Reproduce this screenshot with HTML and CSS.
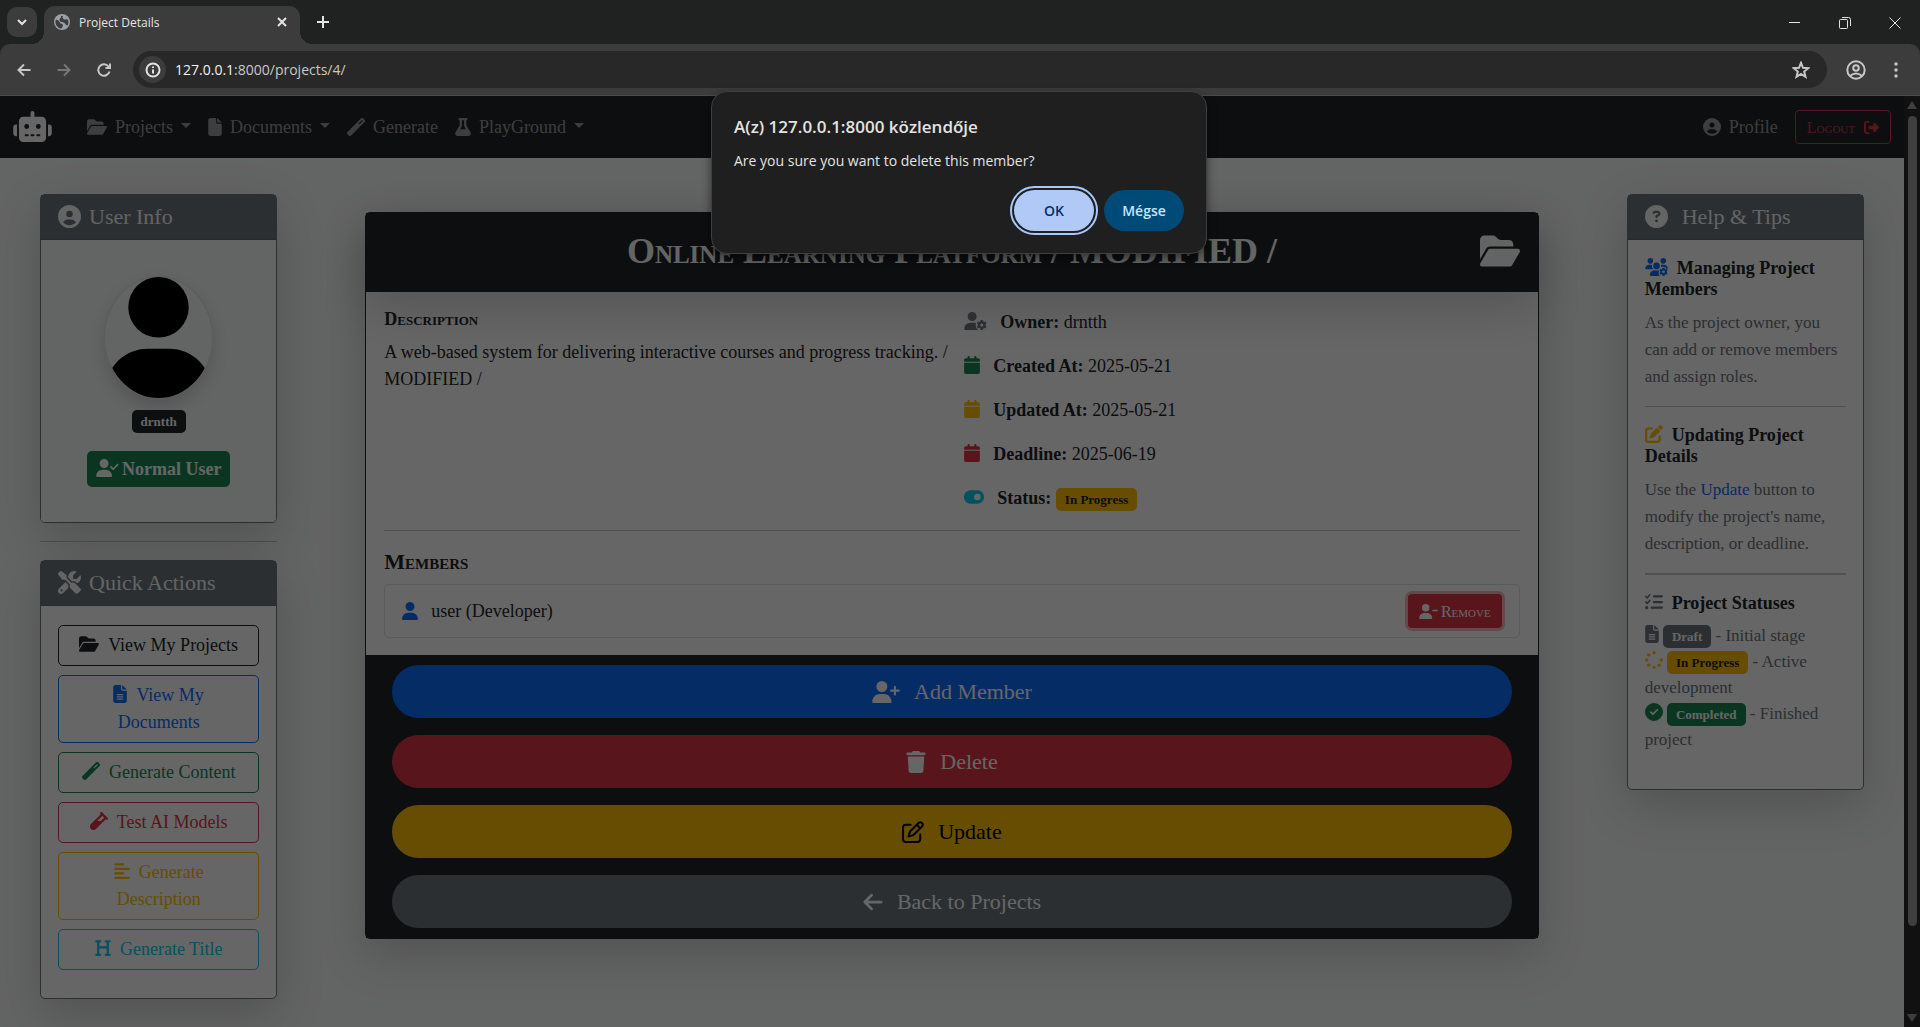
FILE: index.html
```html
<!DOCTYPE html>
<html lang="en">
<head>
<meta charset="utf-8">
<meta name="viewport" content="width=device-width, initial-scale=1">
<title>Project Details</title>
<link rel="stylesheet" href="styles.css">
</head>
<body>
<svg class="sprite" aria-hidden="true">
  <symbol id="robot" viewBox="0 0 640 512"><path d="M320 0c17.7 0 32 14.3 32 32V96H472c39.8 0 72 32.2 72 72V440c0 39.8-32.2 72-72 72H168c-39.8 0-72-32.2-72-72V168c0-39.8 32.2-72 72-72H288V32c0-17.7 14.3-32 32-32zM208 384c-8.8 0-16 7.2-16 16s7.2 16 16 16h32c8.8 0 16-7.2 16-16s-7.2-16-16-16H208zm96 0c-8.8 0-16 7.2-16 16s7.2 16 16 16h32c8.8 0 16-7.2 16-16s-7.2-16-16-16H304zm96 0c-8.8 0-16 7.2-16 16s7.2 16 16 16h32c8.8 0 16-7.2 16-16s-7.2-16-16-16H400zM264 256a40 40 0 1 0 -80 0 40 40 0 1 0 80 0zm152 40a40 40 0 1 0 0-80 40 40 0 1 0 0 80zM48 224H64V416H48c-26.5 0-48-21.5-48-48V272c0-26.5 21.5-48 48-48zm544 0c26.5 0 48 21.5 48 48v96c0 26.5-21.5 48-48 48H576V224h16z"/></symbol>
  <symbol id="folder" viewBox="0 0 576 512"><path d="M88.7 223.8L0 375.8V96C0 60.7 28.7 32 64 32H181.5c17 0 33.3 6.7 45.3 18.7l26.5 26.5c12 12 28.3 18.7 45.3 18.7H416c35.3 0 64 28.7 64 64v32H144c-22.8 0-43.8 12.1-55.3 31.8zm27.6 16.1C122.1 230 132.6 224 144 224H544c11.5 0 22 6.1 27.7 16.1s5.7 22.2-.1 32.1l-112 192C453.9 474 443.4 480 432 480H32c-11.5 0-22-6.1-27.7-16.1s-5.7-22.2 .1-32.1l112-192z"/></symbol>
  <symbol id="file" viewBox="0 0 384 512"><path d="M64 0C28.7 0 0 28.7 0 64V448c0 35.3 28.7 64 64 64H320c35.3 0 64-28.7 64-64V160H256c-17.7 0-32-14.3-32-32V0H64zM256 0V128H384L256 0z"/></symbol>
  <symbol id="file-lines" viewBox="0 0 384 512"><path d="M64 0C28.7 0 0 28.7 0 64V448c0 35.3 28.7 64 64 64H320c35.3 0 64-28.7 64-64V160H256c-17.7 0-32-14.3-32-32V0H64zM256 0V128H384L256 0zM112 256H272c8.8 0 16 7.2 16 16s-7.2 16-16 16H112c-8.8 0-16-7.2-16-16s7.2-16 16-16zm0 64H272c8.8 0 16 7.2 16 16s-7.2 16-16 16H112c-8.8 0-16-7.2-16-16s7.2-16 16-16zm0 64H272c8.8 0 16 7.2 16 16s-7.2 16-16 16H112c-8.8 0-16-7.2-16-16s7.2-16 16-16z"/></symbol>
  <symbol id="wand" viewBox="0 0 512 512"><path d="M14.1 463.3c-18.7-18.7-18.7-49.1 0-67.9L395.4 14.1c18.7-18.7 49.1-18.7 67.9 0l34.6 34.6c18.7 18.7 18.7 49.1 0 67.9L116.5 497.9c-18.7 18.7-49.1 18.7-67.9 0L14.1 463.3zM347.6 187.6l105-105L429.4 59.3l-105 105 23.3 23.3z"/></symbol>
  <symbol id="flask" viewBox="0 0 448 512"><path d="M288 0H160 128C110.3 0 96 14.3 96 32s14.3 32 32 32V196.8c0 11.8-3.3 23.5-9.5 33.5L10.3 406.2C3.6 417.2 0 429.7 0 442.6C0 480.9 31.1 512 69.4 512H378.6c38.3 0 69.4-31.1 69.4-69.4c0-12.8-3.6-25.4-10.3-36.4L329.5 230.4c-6.2-10.1-9.5-21.7-9.5-33.5V64c17.7 0 32-14.3 32-32s-14.3-32-32-32H288zM192 196.8V64h64V196.8c0 23.7 6.6 46.9 19 67.1L309.5 320h-171L173 263.9c12.4-20.2 19-43.4 19-67.1z"/></symbol>
  <symbol id="vial" viewBox="0 0 512 512"><path d="M342.6 9.4c-12.5-12.5-32.8-12.5-45.3 0s-12.5 32.8 0 45.3l9.4 9.4L28.1 342.6C10.1 360.6 0 385 0 410.5V416c0 53 43 96 96 96h5.5c25.5 0 49.9-10.1 67.9-28.1L448 205.3l9.4 9.4c12.5 12.5 32.8 12.5 45.3 0s12.5-32.8 0-45.3l-32-32-96-96-32-32zM205.3 256L352 109.3 402.7 160l-96 96H205.3z"/></symbol>
  <symbol id="circle-user" viewBox="0 0 512 512"><path d="M399 384.2C376.9 345.8 335.4 320 288 320H224c-47.4 0-88.9 25.8-111 64.2c35.2 39.2 86.2 63.8 143 63.8s107.8-24.7 143-63.8zM0 256a256 256 0 1 1 512 0A256 256 0 1 1 0 256zm256 16a72 72 0 1 0 0-144 72 72 0 1 0 0 144z"/></symbol>
  <symbol id="circle-question" viewBox="0 0 512 512"><path d="M256 512A256 256 0 1 0 256 0a256 256 0 1 0 0 512zM169.8 165.3c7.9-22.3 29.1-37.3 52.8-37.3h58.3c34.9 0 63.1 28.3 63.1 63.1c0 22.6-12.1 43.5-31.7 54.8L280 264.4c-.2 13-10.9 23.6-24 23.6c-13.3 0-24-10.7-24-24V250.5c0-8.6 4.6-16.5 12.1-20.8l44.3-25.4c4.7-2.7 7.6-7.7 7.6-13.1c0-8.4-6.8-15.1-15.1-15.1H222.6c-3.4 0-6.4 2.1-7.5 5.3l-.4 1.2c-4.4 12.5-18.2 19-30.6 14.6s-19-18.2-14.6-30.6l.4-1.2zM224 352a32 32 0 1 1 64 0 32 32 0 1 1 -64 0z"/></symbol>
  <symbol id="logout" viewBox="0 0 512 512"><path d="M377.9 105.9L500.7 228.7c7.2 7.2 11.3 17.1 11.3 27.3s-4.1 20.1-11.3 27.3L377.9 406.1c-6.4 6.4-15 9.9-24 9.9c-18.7 0-33.9-15.2-33.9-33.9l0-62.1-128 0c-17.7 0-32-14.3-32-32l0-64c0-17.7 14.3-32 32-32l128 0 0-62.1c0-18.7 15.2-33.9 33.9-33.9c9 0 17.6 3.6 24 9.9zM160 96L96 96c-17.7 0-32 14.3-32 32l0 256c0 17.7 14.3 32 32 32l64 0c17.7 0 32 14.3 32 32s-14.3 32-32 32l-64 0c-53 0-96-43-96-96L0 128C0 75 43 32 96 32l64 0c17.7 0 32 14.3 32 32s-14.3 32-32 32z"/></symbol>
  <symbol id="tools" viewBox="0 0 512 512"><path d="M78.6 5C69.1-2.4 55.6-1.5 47 7L7 47c-8.5 8.5-9.4 22-2.1 31.6l80 104c4.5 5.9 11.6 9.4 19 9.4h54.1l109 109c-14.7 29-10 65.4 14.3 89.6l112 112c12.5 12.5 32.8 12.5 45.3 0l64-64c12.5-12.5 12.5-32.8 0-45.3l-112-112c-24.2-24.2-60.6-29-89.6-14.3l-109-109V104c0-7.5-3.5-14.5-9.4-19L78.6 5zM19.9 396.1C7.2 408.8 0 426.1 0 444.1C0 481.6 30.4 512 67.9 512c18 0 35.3-7.2 48-19.9L233.7 374.3c-7.8-20.9-9-43.6-3.6-65.1l-61.7-61.7L19.9 396.1zM512 144c0-10.5-1.1-20.7-3.2-30.5c-2.4-11.2-16.1-14.1-24.2-6l-63.9 63.9c-3 3-7.1 4.7-11.3 4.7H352c-8.8 0-16-7.2-16-16V102.6c0-4.2 1.7-8.3 4.7-11.3l63.9-63.9c8.1-8.1 5.2-21.8-6-24.2C388.7 1.1 378.5 0 368 0C288.5 0 224 64.5 224 144l0 .8 85.3 85.3c36-9.1 75.8 .5 104 28.7L429 274.5c49-23 83-72.8 83-130.5zM56 432a24 24 0 1 1 48 0 24 24 0 1 1 -48 0z"/></symbol>
  <symbol id="align-left" viewBox="0 0 448 512"><path d="M32 64H256M32 192H416M32 320H256M32 448H416" fill="none" stroke="currentColor" stroke-width="64" stroke-linecap="round"/></symbol>
  <symbol id="heading" viewBox="0 0 448 512"><path d="M32 64H144M304 64H416M32 448H144M304 448H416M88 64V448M360 64V448M88 240H360" fill="none" stroke="currentColor" stroke-width="64" stroke-linecap="round"/></symbol>
  <symbol id="user" viewBox="0 0 448 512"><path d="M224 256A128 128 0 1 0 224 0a128 128 0 1 0 0 256zm-45.7 48C79.8 304 0 383.8 0 482.3C0 498.7 13.3 512 29.7 512H418.3c16.4 0 29.7-13.3 29.7-29.7C448 383.8 368.2 304 269.7 304H178.3z"/></symbol>
  <symbol id="user-plus" viewBox="0 0 640 512"><path d="M96 128a128 128 0 1 1 256 0A128 128 0 1 1 96 128zM0 482.3C0 383.8 79.8 304 178.3 304h91.4C368.2 304 448 383.8 448 482.3c0 16.4-13.3 29.7-29.7 29.7H29.7C13.3 512 0 498.7 0 482.3zM504 312V248H440c-13.3 0-24-10.7-24-24s10.7-24 24-24h64V136c0-13.3 10.7-24 24-24s24 10.7 24 24v64h64c13.3 0 24 10.7 24 24s-10.7 24-24 24H552v64c0 13.3-10.7 24-24 24s-24-10.7-24-24z"/></symbol>
  <symbol id="user-minus" viewBox="0 0 640 512"><path d="M96 128a128 128 0 1 1 256 0A128 128 0 1 1 96 128zM0 482.3C0 383.8 79.8 304 178.3 304h91.4C368.2 304 448 383.8 448 482.3c0 16.4-13.3 29.7-29.7 29.7H29.7C13.3 512 0 498.7 0 482.3zM472 200H616c13.3 0 24 10.7 24 24s-10.7 24-24 24H472c-13.3 0-24-10.7-24-24s10.7-24 24-24z"/></symbol>
  <symbol id="user-check" viewBox="0 0 640 512"><path d="M96 128a128 128 0 1 1 256 0A128 128 0 1 1 96 128zM0 482.3C0 383.8 79.8 304 178.3 304h91.4C368.2 304 448 383.8 448 482.3c0 16.4-13.3 29.7-29.7 29.7H29.7C13.3 512 0 498.7 0 482.3zM625 177L497 305c-9.4 9.4-24.6 9.4-33.9 0l-64-64c-9.4-9.4-9.4-24.6 0-33.9s24.6-9.4 33.9 0l47 47L591 143c9.4-9.4 24.6-9.4 33.9 0s9.4 24.6 0 33.9z"/></symbol>
  <symbol id="gear" viewBox="0 0 512 512"><path d="M495.9 166.6c3.2 8.7 .5 18.4-6.4 24.6l-43.3 39.4c1.1 8.3 1.7 16.8 1.7 25.4s-.6 17.1-1.7 25.4l43.3 39.4c6.9 6.2 9.6 15.9 6.4 24.6c-4.4 11.9-9.7 23.3-15.8 34.3l-4.7 8.1c-6.6 11-14 21.4-22.1 31.2c-5.9 7.2-15.7 9.6-24.5 6.8l-55.7-17.7c-13.4 10.3-28.2 18.9-44 25.4l-12.5 57.1c-2 9.1-9 16.3-18.2 17.8c-13.8 2.3-28 3.5-42.5 3.5s-28.7-1.2-42.5-3.5c-9.2-1.5-16.2-8.7-18.2-17.8l-12.5-57.1c-15.8-6.5-30.6-15.1-44-25.4L83.1 425.9c-8.8 2.8-18.6 .3-24.5-6.8c-8.1-9.8-15.5-20.2-22.1-31.2l-4.7-8.1c-6.1-11-11.4-22.4-15.8-34.3c-3.2-8.7-.5-18.4 6.4-24.6l43.3-39.4C64.6 273.1 64 264.6 64 256s.6-17.1 1.7-25.4L22.4 191.2c-6.9-6.2-9.6-15.9-6.4-24.6c4.4-11.9 9.7-23.3 15.8-34.3l4.7-8.1c6.6-11 14-21.4 22.1-31.2c5.9-7.2 15.7-9.6 24.5-6.8l55.7 17.7c13.4-10.3 28.2-18.9 44-25.4l12.5-57.1c2-9.1 9-16.3 18.2-17.8C227.3 1.2 241.5 0 256 0s28.7 1.2 42.5 3.5c9.2 1.5 16.2 8.7 18.2 17.8l12.5 57.1c15.8 6.5 30.6 15.1 44 25.4l55.7-17.7c8.8-2.8 18.6-.3 24.5 6.8c8.1 9.8 15.5 20.2 22.1 31.2l4.7 8.1c6.1 11 11.4 22.4 15.8 34.3zM256 336a80 80 0 1 0 0-160 80 80 0 1 0 0 160z"/></symbol>
  <symbol id="user-gear" viewBox="0 0 640 512"><path d="M224 256A128 128 0 1 0 224 0a128 128 0 1 0 0 256zM178.3 304C79.8 304 0 383.8 0 482.3C0 498.7 13.3 512 29.7 512H392C350 470 310 420 334 315C314 308 292 304 269.7 304z"/><use href="#gear" x="354" y="226" width="286" height="286"/></symbol>
  <symbol id="users-gear" viewBox="0 0 640 512"><path d="M144 160A80 80 0 1 0 144 0a80 80 0 1 0 0 160zm368 0A80 80 0 1 0 512 0a80 80 0 1 0 0 160zM0 298.7C0 310.4 9.6 320 21.3 320H234.7c-26.6-23.5-43.3-57.8-43.3-96c0-7.6 .7-15 1.9-22.3c-13.6-6.3-28.7-9.7-44.6-9.7H106.7C47.8 192 0 239.8 0 298.7zM320 320a96 96 0 1 0 0-192a96 96 0 1 0 0 192zM261.3 352C187.7 352 128 411.7 128 485.3c0 14.7 11.9 26.7 26.7 26.7H410C380 470 372 415 395 358C387 354 380 352 372 352zM640 298.7C640 239.8 592.2 192 533.3 192H490.7c-15.9 0-31 3.5-44.6 9.7c1.3 7.2 1.9 14.7 1.9 22.3c0 15-2.6 29-7 42c70-30 140-10 170 54c16 0 29-8 29-21.3z"/><use href="#gear" x="398" y="270" width="242" height="242"/></symbol>
  <symbol id="calendar" viewBox="0 0 448 512"><path d="M96 32V64H48C21.5 64 0 85.5 0 112v48H448V112c0-26.5-21.5-48-48-48H352V32c0-17.7-14.3-32-32-32s-32 14.3-32 32V64H160V32c0-17.7-14.3-32-32-32S96 14.3 96 32zM448 192H0V464c0 26.5 21.5 48 48 48H400c26.5 0 48-21.5 48-48V192z"/></symbol>
  <symbol id="toggle" viewBox="0 0 576 512"><path d="M192 64C86 64 0 150 0 256S86 448 192 448H384c106 0 192-86 192-192s-86-192-192-192H192zm192 96a96 96 0 1 1 0 192 96 96 0 1 1 0-192z"/></symbol>
  <symbol id="trash" viewBox="0 0 448 512"><path d="M135.2 17.7L128 32H32C14.3 32 0 46.3 0 64S14.3 96 32 96H416c17.7 0 32-14.3 32-32s-14.3-32-32-32H320l-7.2-14.3C307.4 6.8 296.3 0 284.2 0H163.8c-12.1 0-23.2 6.8-28.6 17.7zM416 128H32L53.2 467c1.6 25.3 22.6 45 47.9 45H346.9c25.3 0 46.3-19.7 47.9-45L416 128z"/></symbol>
  <symbol id="edit-outline" viewBox="0 0 512 512"><path d="M441 58.9L453.1 71c9.4 9.4 9.4 24.6 0 33.9L424 134.1 377.9 88 407 58.9c9.4-9.4 24.6-9.4 33.9 0zM209.8 256.2L344 121.9 390.1 168 255.8 302.2c-2.9 2.9-6.5 5-10.4 6.1l-58.5 16.7 16.7-58.5c1.1-3.9 3.2-7.5 6.1-10.4zM373.1 25L175.8 222.2c-8.7 8.7-15 19.4-18.3 31.1l-28.6 100c-2.4 8.4-.1 17.4 6.1 23.6s15.2 8.5 23.6 6.1l100-28.6c11.8-3.4 22.5-9.7 31.1-18.3L487 138.9c28.1-28.1 28.1-73.7 0-101.8L474.9 25C446.8-3.1 401.2-3.1 373.1 25zM88 64C39.4 64 0 103.4 0 152V424c0 48.6 39.4 88 88 88H360c48.6 0 88-39.4 88-88V312c0-13.3-10.7-24-24-24s-24 10.7-24 24V424c0 22.1-17.9 40-40 40H88c-22.1 0-40-17.9-40-40V152c0-22.1 17.9-40 40-40H200c13.3 0 24-10.7 24-24s-10.7-24-24-24H88z"/></symbol>
  <symbol id="edit" viewBox="0 0 512 512"><path d="M471.6 21.7c-21.9-21.9-57.3-21.9-79.2 0L362.3 51.7l97.9 97.9 30.1-30.1c21.9-21.9 21.9-57.3 0-79.2L471.6 21.7zm-299.2 220c-6.1 6.1-10.8 13.6-13.5 21.9l-29.6 88.8c-2.9 8.6-.6 18.1 5.8 24.6s15.9 8.7 24.6 5.8l88.8-29.6c8.2-2.7 15.7-7.4 21.9-13.5L437.7 172.3 339.7 74.3 172.4 241.7zM96 64C43 64 0 107 0 160V416c0 53 43 96 96 96H352c53 0 96-43 96-96V320c0-17.7-14.3-32-32-32s-32 14.3-32 32v96c0 17.7-14.3 32-32 32H96c-17.7 0-32-14.3-32-32V160c0-17.7 14.3-32 32-32h96c17.7 0 32-14.3 32-32s-14.3-32-32-32H96z"/></symbol>
  <symbol id="arrow-left" viewBox="0 0 448 512"><path d="M9.4 233.4c-12.5 12.5-12.5 32.8 0 45.3l160 160c12.5 12.5 32.8 12.5 45.3 0s12.5-32.8 0-45.3L109.2 288 416 288c17.7 0 32-14.3 32-32s-14.3-32-32-32l-306.7 0L214.6 118.6c12.5-12.5 12.5-32.8 0-45.3s-32.8-12.5-45.3 0l-160 160z"/></symbol>
  <symbol id="list-check" viewBox="0 0 512 512"><path d="M24 100l40 36 72-84M24 260l40 36 72-84" fill="none" stroke="currentColor" stroke-width="46" stroke-linecap="round" stroke-linejoin="round"/><path d="M256 96H480M256 256H480M192 416H480" fill="none" stroke="currentColor" stroke-width="64" stroke-linecap="round"/><circle cx="48" cy="416" r="48"/></symbol>
  <symbol id="spinner" viewBox="0 0 512 512"><circle cx="256" cy="48" r="48"/><circle cx="256" cy="464" r="48"/><circle cx="48" cy="256" r="48"/><circle cx="464" cy="256" r="48"/><circle cx="109" cy="109" r="48"/><circle cx="109" cy="403" r="48"/><circle cx="403" cy="403" r="48"/></symbol>
  <symbol id="circle-check" viewBox="0 0 512 512"><path d="M256 512A256 256 0 1 0 256 0a256 256 0 1 0 0 512zM369 209L241 337c-9.4 9.4-24.6 9.4-33.9 0l-64-64c-9.4-9.4-9.4-24.6 0-33.9s24.6-9.4 33.9 0l47 47L335 175c9.4-9.4 24.6-9.4 33.9 0s9.4 24.6 0 33.9z"/></symbol>
</svg>

<header class="browser">
  <div class="tabstrip">
    <button class="tab-search" aria-label="Search tabs"><svg width="10" height="10" viewBox="0 0 10 10" class="line"><path d="M1 3l4 4 4-4"/></svg></button>
    <div class="tab">
      <svg width="16" height="16" viewBox="0 0 16 16"><circle cx="8" cy="8" r="8" fill="#9aa0a6"/><path d="M2 5.500q3 .5 3.500 2.500t3 2q1 2.500-1 4.500A6.500 6.500 0 0 1 2 5.500zM7 2l2 0q-1 2 .5 3t3 0l1.500 1q1 3-.5 5.500-2-.5-2.500-2t-3-1.500-2.500-2 1.500-2.500z" fill="#3c3c3c"/></svg>
      <span class="tab-title">Project Details</span>
      <button class="tab-close" aria-label="Close tab"><svg width="10" height="10" viewBox="0 0 10 10" class="line"><path d="M1 1l8 8M9 1l-8 8"/></svg></button>
    </div>
    <button class="icon-btn" aria-label="New tab"><svg width="12" height="12" viewBox="0 0 12 12" class="line"><path d="M6 0v12M0 6h12"/></svg></button>
    <div class="window-controls">
      <button class="win-btn" aria-label="Minimize"><svg width="12" height="12" viewBox="0 0 12 12" class="line thin"><path d="M0 5.500h11"/></svg></button>
      <button class="win-btn" aria-label="Restore"><svg width="12" height="12" viewBox="0 0 12 12" class="line thin"><rect x=".5" y="2.500" width="8" height="9" rx="1"/><path d="M3 .5h6.500q2 0 2 2V9"/></svg></button>
      <button class="win-btn" aria-label="Close"><svg width="12" height="12" viewBox="0 0 12 12" class="line thin"><path d="M.5 .5l11 11M11.500 .5l-11 11"/></svg></button>
    </div>
  </div>
  <div class="toolbar">
    <button class="tool-btn" aria-label="Back"><svg width="14" height="14" viewBox="0 0 14 14" class="line"><path d="M13.500 7H1.500M7 1.500L1.500 7 7 12.500"/></svg></button>
    <button class="tool-btn dim" aria-label="Forward"><svg width="14" height="14" viewBox="0 0 14 14" class="line"><path d="M.5 7h12M7 1.500L12.500 7 7 12.500"/></svg></button>
    <button class="tool-btn" aria-label="Reload"><svg width="14" height="14" viewBox="0 0 14 14" class="line"><path d="M12.500 8.500a5.700 5.700 0 1 1-1-5L13 5M13 .5V5H8.500"/></svg></button>
    <div class="omnibox">
      <span class="site-info"><svg width="16" height="16" viewBox="0 0 16 16" class="line"><circle cx="8" cy="8" r="6.500"/><path d="M8 7.500v4M8 4.500v1.500"/></svg></span>
      <span class="url"><span class="host">127.0.0.1</span>:8000/projects/4/</span>
      <svg width="18" height="18" viewBox="0 0 18 18" class="line"><path d="M9 1.800l2 5 5.300.4-4.100 3.400 1.300 5.200L9 13l-4.500 2.800 1.300-5.200L1.700 7.200 7 6.800z"/></svg>
    </div>
    <button class="tool-btn" aria-label="Profile"><svg width="20" height="20" viewBox="0 0 20 20" class="line"><circle cx="10" cy="10" r="8.700"/><circle cx="10" cy="8" r="2.800"/><path d="M4 16q6-5 12 0"/></svg></button>
    <button class="tool-btn" aria-label="Menu"><svg width="4" height="16" viewBox="0 0 4 16" class="dots"><circle cx="2" cy="2" r="1.700"/><circle cx="2" cy="8" r="1.700"/><circle cx="2" cy="14" r="1.700"/></svg></button>
  </div>
</header>

<div class="viewport">
  <div class="page">
    <nav class="navbar">
      <a class="brand" href="#" aria-label="Home"><svg class="fa" viewBox="0 0 640 512"><use href="#robot"/></svg></a>
      <a class="nav-link caret" href="#"><svg class="fa w20"><use href="#folder"/></svg>Projects</a>
      <a class="nav-link caret" href="#"><svg class="fa w14"><use href="#file"/></svg>Documents</a>
      <a class="nav-link" href="#"><svg class="fa w18"><use href="#wand"/></svg>Generate</a>
      <a class="nav-link caret" href="#"><svg class="fa w16"><use href="#flask"/></svg>PlayGround</a>
      <a class="nav-link nav-end" href="#"><svg class="fa w18"><use href="#circle-user"/></svg>Profile</a>
      <button class="btn-sm logout">Logout <svg class="fa"><use href="#logout"/></svg></button>
    </nav>

    <main class="columns">
      <aside class="side">
        <section class="card">
          <h2 class="card-head"><svg class="fa"><use href="#circle-user"/></svg>User Info</h2>
          <div class="user-body">
            <svg class="avatar" viewBox="0 0 448 512"><use href="#user"/></svg>
            <span class="badge dark">drntth</span>
            <span class="badge role"><svg class="fa w23"><use href="#user-check"/></svg>Normal User</span>
          </div>
        </section>
        <hr>
        <section class="card">
          <h2 class="card-head"><svg class="fa"><use href="#tools"/></svg>Quick Actions</h2>
          <div class="actions">
            <a class="btn-outline c-dark" href="#"><svg class="fa w20"><use href="#folder"/></svg>View My Projects</a>
            <a class="btn-outline c-primary" href="#"><svg class="fa w14"><use href="#file-lines"/></svg>View My Documents</a>
            <a class="btn-outline c-success" href="#"><svg class="fa w18"><use href="#wand"/></svg>Generate Content</a>
            <a class="btn-outline c-danger" href="#"><svg class="fa w18"><use href="#vial"/></svg>Test AI Models</a>
            <a class="btn-outline c-warning" href="#"><svg class="fa w16"><use href="#align-left"/></svg>Generate Description</a>
            <a class="btn-outline c-info" href="#"><svg class="fa w16"><use href="#heading"/></svg>Generate Title</a>
          </div>
        </section>
      </aside>

      <section class="project">
        <header class="project-head">
          <h1>Online Learning Platform / MODIFIED /</h1>
          <svg class="fa"><use href="#folder"/></svg>
        </header>
        <div class="project-body">
          <div class="details">
            <div>
              <h3>Description</h3>
              <p>A web-based system for delivering interactive courses and progress tracking. / MODIFIED /</p>
            </div>
            <ul class="facts">
              <li><svg class="fa w23 c-secondary"><use href="#user-gear"/></svg><strong>Owner:</strong> drntth</li>
              <li><svg class="fa w16 c-success"><use href="#calendar"/></svg><strong>Created At:</strong> 2025-05-21</li>
              <li><svg class="fa w16 c-warning"><use href="#calendar"/></svg><strong>Updated At:</strong> 2025-05-21</li>
              <li><svg class="fa w16 c-danger"><use href="#calendar"/></svg><strong>Deadline:</strong> 2025-06-19</li>
              <li><svg class="fa w20 c-info"><use href="#toggle"/></svg><strong>Status:</strong> <span class="badge warning">In Progress</span></li>
            </ul>
          </div>
          <hr>
          <h2 class="members-title">Members</h2>
          <ul class="members">
            <li><svg class="fa w16 c-primary"><use href="#user"/></svg>user (Developer)<button class="btn-sm remove"><svg class="fa"><use href="#user-minus"/></svg>Remove</button></li>
          </ul>
        </div>
        <footer class="project-foot">
          <button class="pill primary"><svg class="fa w28"><use href="#user-plus"/></svg>Add Member</button>
          <button class="pill danger"><svg class="fa w20"><use href="#trash"/></svg>Delete</button>
          <button class="pill warning"><svg class="fa w22"><use href="#edit-outline"/></svg>Update</button>
          <button class="pill secondary"><svg class="fa w20"><use href="#arrow-left"/></svg>Back to Projects</button>
        </footer>
      </section>

      <aside class="side">
        <section class="card">
          <h2 class="card-head help-head"><svg class="fa"><use href="#circle-question"/></svg>Help &amp; Tips</h2>
          <div class="help-body">
            <h3><svg class="fa w23 c-primary"><use href="#users-gear"/></svg>Managing Project Members</h3>
            <p>As the project owner, you can add or remove members and assign roles.</p>
            <hr>
            <h3><svg class="fa w18 c-warning"><use href="#edit"/></svg>Updating Project Details</h3>
            <p>Use the <a href="#">Update</a> button to modify the project's name, description, or deadline.</p>
            <hr class="thick">
            <h3><svg class="fa w18 c-secondary"><use href="#list-check"/></svg>Project Statuses</h3>
            <ul class="statuses">
              <li><svg class="fa w14"><use href="#file-lines"/></svg> <span class="badge secondary">Draft</span> - Initial stage</li>
              <li><svg class="fa w18 c-warning"><use href="#spinner"/></svg> <span class="badge warning">In Progress</span> - Active development</li>
              <li><svg class="fa w18 c-success"><use href="#circle-check"/></svg> <span class="badge success">Completed</span> - Finished project</li>
            </ul>
          </div>
        </section>
      </aside>
    </main>
  </div>
  <div class="scrollbar" aria-hidden="true"><i class="arrow up"></i><i class="thumb"></i><i class="arrow down"></i></div>
  <div class="backdrop"></div>
</div>

<dialog class="confirm" open aria-labelledby="confirm-title">
  <h2 id="confirm-title">A(z) 127.0.0.1:8000 közlendője</h2>
  <p>Are you sure you want to delete this member?</p>
  <div class="confirm-actions">
    <button class="ok">OK</button>
    <button class="cancel">Mégse</button>
  </div>
</dialog>
</body>
</html>
```

FILE: styles.css
```css
* { box-sizing: border-box; }

body {
  margin: 0;
  height: 100vh;
  display: flex;
  flex-direction: column;
  overflow: hidden;
  font: 18px/27px "Liberation Serif", "Times New Roman", serif;
  color: #212529;
  background: #202221;
}

h1, h2, h3, p, ul { margin: 0; padding: 0; font-size: inherit; }
ul { list-style: none; }
button { font: inherit; color: inherit; border: 0; padding: 0; background: none; cursor: pointer; }
a { text-decoration: none; }
.sprite { display: none; }
hr { margin: 18px 0; border: 0; border-top: 1px solid #212529; opacity: .25; }

/* Icons */
.fa { height: 18px; width: 18px; fill: currentColor; fill-rule: evenodd; vertical-align: -2px; flex: none; }
.w14 { width: 14px; }
.w16 { width: 16px; }
.w18 { width: 18px; }
.w20 { width: 20px; }
.w22 { width: 22px; }
.w23 { width: 23px; }
.w28 { width: 28px; }

.c-dark { color: #212529; }
.c-primary { color: #0d6efd; }
.c-success { color: #198754; }
.c-danger { color: #dc3545; }
.c-warning { color: #ffc107; }
.c-info { color: #0dcaf0; }
.c-secondary { color: #6c757d; }

/* Browser frame */
.browser { flex: none; font: 12px/16px "Open Sans", "Noto Sans", sans-serif; color: #e3e3e3; }
.browser button { display: grid; place-items: center; }
.line { fill: none; stroke: currentColor; stroke-width: 2; }
.line.thin { stroke-width: 1; }
.dots { fill: currentColor; }
.tabstrip { height: 44px; display: flex; align-items: center; padding: 6px 0 0 7px; }
.tab-search { width: 30px; height: 30px; border-radius: 10px; background: #3c3c3c !important; margin: 0 7px 6px 0; }
.tab {
  position: relative;
  align-self: stretch;
  width: 256px;
  display: flex;
  align-items: center;
  gap: 9px;
  padding: 0 12px 6px 10px;
  background: #3c3c3c;
  border-radius: 11px 11px 0 0;
}
.tab::before, .tab::after {
  content: "";
  position: absolute;
  bottom: 0;
  width: 12px;
  height: 12px;
}
.tab::before { right: 100%; background: radial-gradient(circle at 0 0, transparent 12px, #3c3c3c 12px); }
.tab::after { left: 100%; background: radial-gradient(circle at 100% 0, transparent 12px, #3c3c3c 12px); }
.tab-title { flex: 1; padding-top: 2px; }
.tab-close { width: 12px; height: 16px; }
.icon-btn { width: 30px; height: 30px; margin: 0 8px 6px; }
.window-controls { display: flex; margin-left: auto; padding-bottom: 4px; }
.win-btn { width: 50px; height: 30px; }
.toolbar {
  height: 52px;
  display: flex;
  align-items: center;
  padding: 0 4px;
  background: #3c3c3c;
  border-bottom: 1px solid #4c4c4c;
  border-radius: 10px 10px 0 0;
}
.tool-btn { width: 40px; height: 36px; color: #c7c7c7; }
.tool-btn.dim { color: #777; }
.omnibox {
  flex: 1;
  height: 37px;
  margin: 0 9px;
  padding: 0 17px 0 6px;
  display: flex;
  align-items: center;
  gap: 9px;
  border-radius: 19px;
  background: #282828;
  color: #c7c7c7;
  font-size: 14px;
}
.site-info { width: 27px; height: 27px; border-radius: 14px; background: #3c3c3c; display: grid; place-items: center; color: #e3e3e3; }
.url { flex: 1; }
.host { color: #f0f0f0; }

/* Web page area */
.viewport { position: relative; flex: 1; min-height: 0; display: flex; }
.page { flex: 1; min-width: 0; overflow: hidden; background: #f8f9fa; }
.backdrop { position: absolute; inset: 0; background: rgba(0, 0, 0, .6); }
.scrollbar { width: 16px; background: #2c2c2c; display: flex; flex-direction: column; align-items: center; padding: 5px 0; gap: 7px; }
.arrow { border: 5px solid transparent; }
.arrow.up { border-top: 0; border-bottom: 8px solid #9f9f9f; }
.arrow.down { border-bottom: 0; border-top: 8px solid #9f9f9f; margin-top: auto; }
.thumb { width: 9px; height: 88%; border-radius: 5px; background: #9f9f9f; }

.navbar { height: 62px; padding: 0 13px; display: flex; align-items: center; background: #212529; }
.brand { color: #fff; margin-right: 35px; padding-bottom: 2px; }
.brand .fa { display: block; width: 39px; height: 31px; }
.nav-link { display: flex; align-items: center; gap: 8px; margin-right: 17px; color: rgba(255, 255, 255, .55); }
.caret::after { content: ""; border: 5px solid transparent; border-top-color: currentColor; border-bottom: 0; margin-bottom: 4px; }
.nav-end { margin-left: auto; }
.btn-sm { height: 34px; padding: 0 11px; border-radius: 4px; font-size: 16px; font-variant: small-caps; }
.btn-sm .fa { height: 15px; width: 15px; }
.logout { border: 1px solid #dc3545; color: #dc3545; }
.logout .fa { margin-left: 5px; }

.columns { display: grid; grid-template-columns: minmax(0, 1fr) minmax(0, 4fr) minmax(0, 1fr); align-items: start; }
.side { padding: 36px 40px; }

.card { border: 1px solid #6c757d; border-radius: 5px; background: #fff; box-shadow: 0 16px 48px rgba(0, 0, 0, .175); }
.card-head {
  height: 45px;
  padding: 0 17px 2px;
  display: flex;
  align-items: center;
  gap: 8px;
  background: #6c757d;
  border-bottom: 1px solid #61696f;
  color: #f8f9fa;
  font-size: 22px;
  font-weight: 400;
}
.card-head .fa { width: 23px; height: 23px; }
.help-head { gap: 14px; }

.user-body { display: flex; flex-direction: column; align-items: center; padding: 36px 17px 35px; background: #f8f9fa; border-radius: 0 0 4px 4px; }
.avatar { width: 109px; height: 123px; border: 1px solid #dee2e6; border-radius: 50%; fill: #000; box-shadow: 0 8px 16px rgba(0, 0, 0, .15); margin-bottom: 11px; }
.badge { display: inline-block; padding: 0 9px; border-radius: 5px; font-size: 13px; line-height: 23px; font-weight: 700; color: #fff; vertical-align: baseline; }
.badge.dark { background: #212529; }
.badge.secondary { background: #6c757d; }
.badge.success { background: #198754; }
.badge.warning { background: #ffc107; color: #212529; }
.badge.role { margin-top: 18px; font-size: 18px; line-height: 36px; background: #198754; }
.badge.role .fa { margin-right: 3px; }

.actions { display: flex; flex-direction: column; gap: 9px; padding: 19px 17px 28px; }
.btn-outline { border: 1px solid currentColor; border-radius: 5px; padding: 6px 12px; line-height: 27px; text-align: center; }
.btn-outline .fa { margin-right: 9px; }

/* Project card */
.project { margin: 54px 48px 0; border: 1px solid #212529; border-radius: 5px; background: #fff; box-shadow: 0 16px 48px rgba(0, 0, 0, .175); }
.project-head { height: 79px; padding: 0 18px 3px; display: flex; align-items: center; background: #212529; color: #f8f9fa; box-shadow: 0 16px 48px rgba(0, 0, 0, .175); }
.project-head h1 { flex: 1; padding-left: 40px; font-size: 36px; line-height: 42px; font-variant: small-caps; text-align: center; }
.project-head .fa { width: 40px; height: 36px; }
.project-body { padding: 17px 18px; }
.details { display: grid; grid-template-columns: 51fr 49fr; }
.details h3 { font-variant: small-caps; line-height: 21px; margin-bottom: 9px; }
.facts { display: grid; gap: 18px; padding: 0 0 1px 1px; }
.facts .fa, .members .fa { margin-right: 13px; }
.facts li { height: 26px; }
.members-title { font-size: 22px; line-height: 26px; font-variant: small-caps; margin-bottom: 9px; }
.members li { height: 54px; padding: 0 17px; display: flex; align-items: center; border: 1px solid #dee2e6; border-radius: 5px; }
.remove { margin-left: auto; background: #dc3545; color: #fff; box-shadow: 0 0 0 3px rgba(220, 53, 69, .35); }
.members .remove .fa { width: 19px; margin-right: 3px; }
.project-foot { display: flex; flex-direction: column; gap: 17px; padding: 10px 26px; background: #212529; }
.pill { height: 53px; border-radius: 27px; display: flex; align-items: center; justify-content: center; gap: 14px; font-size: 22px; color: #fff; }
.pill .fa { height: 22px; }
.pill.primary { background: #0d6efd; }
.pill.danger { background: #dc3545; }
.pill.warning { background: #ffc107; color: #000; }
.pill.secondary { background: #6c757d; }

/* Help panel */
.help-body { padding: 18px 17px; }
.help-body h3 { line-height: 21px; margin-bottom: 9px; }
.help-body h3 .fa { margin-right: 9px; }
.help-body p, .statuses { font-size: 17px; line-height: 27px; color: #6c757d; }
.help-body hr { margin: 16px 0 18px; }
.help-body .statuses { line-height: 26px; margin-bottom: 18px; }
.help-body a { color: #0d6efd; }
.help-body .thick { border-top-width: 2px; }

/* Confirmation dialog */
.confirm {
  position: absolute;
  top: 91px;
  left: 50%;
  right: auto;
  width: 496px;
  margin: 0 0 0 -249px;
  padding: 24px 22px 22px;
  border: 1px solid #3f3f3f;
  border-radius: 16px;
  background: #1f1f1f;
  color: #e3e3e3;
  box-shadow: 0 4px 10px rgba(0, 0, 0, .5);
  font: 14px/20px "Open Sans", "Noto Sans", sans-serif;
}
.confirm h2 { font-size: 17px; line-height: 22px; font-weight: 600; margin-bottom: 13px; }
.confirm-actions { display: flex; justify-content: flex-end; gap: 10px; margin-top: 19px; }
.confirm-actions button { width: 80px; height: 41px; border-radius: 21px; font-weight: 600; }
.confirm-actions .ok { background: #b0c9f7; color: #062e6f; outline: 2px solid #a8c7fa; outline-offset: 2px; }
.confirm-actions .cancel { background: #004a77; color: #c2e7ff; }
```
